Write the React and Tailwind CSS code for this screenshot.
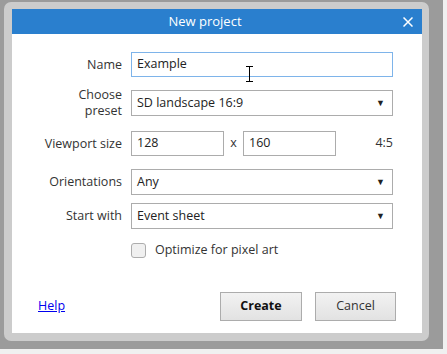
import React from 'react';

const font = { fontFamily: '"Open Sans", "Noto Sans", sans-serif' };

function Label({ children }) {
  return (
    <div className="w-[119px] shrink-0 pr-[9px] text-right text-[12.5px] leading-[16px] text-[#333]">{children}</div>
  );
}

function Select({ value }) {
  return (
    <div className="flex h-[26px] w-[262px] items-center justify-between border border-[#acacac] bg-white pl-[5px] pr-[7px] text-[12.5px] text-[#222]">
      <span>{value}</span>
      <span className="text-[9px] text-[#222]">▼</span>
    </div>
  );
}

export default function App() {
  return (
    <div className="h-[354px] w-[447px] bg-[#f0f0f0]" style={font}>
      <div className="h-[349px] w-[443px] bg-[#9b9b9b] pl-[4px] pt-[2px]">
        <div className="h-[339px] w-[425px] rounded-[7px] bg-[#cccccc] px-[8px] pt-[7px]">
          <div className="flex h-[324px] w-[410px] flex-col bg-white">
            {/* Title bar */}
            <div className="relative flex h-[25px] shrink-0 items-center justify-center bg-[#2a7fce] pr-[24px] text-[13px] text-white">
              New project
              <svg className="absolute right-[9px] top-[8px]" width="10" height="10" viewBox="0 0 10 10">
                <path d="M0.5 0.5 L9.5 9.5 M9.5 0.5 L0.5 9.5" stroke="white" strokeWidth="1.5" />
              </svg>
            </div>

            <div className="flex flex-col pt-[18px]">
              <div className="flex h-[25px] items-center">
                <Label>Name</Label>
                <div className="relative flex h-[25px] w-[262px] items-center border border-[#7eb4ea] bg-white pl-[5px] text-[12.5px] text-[#222]">
                  Example
                  <svg className="absolute left-[114px] top-[13px]" width="7" height="16" viewBox="0 0 7 16">
                    <path d="M0 0.5 H7 M3.5 0.5 V15.5 M0 15.5 H7" stroke="black" strokeWidth="1" />
                  </svg>
                </div>
              </div>

              <div className="mt-[13px] flex h-[26px] items-center">
                <Label>Choose<br />preset</Label>
                <Select value="SD landscape 16:9" />
              </div>

              <div className="mt-[15px] flex h-[25px] items-center">
                <Label>Viewport size</Label>
                <div className="flex h-[25px] w-[93px] items-center border border-[#acacac] pl-[5px] text-[12.5px] text-[#222]">128</div>
                <div className="w-[19px] text-center text-[12.5px] text-[#333]">x</div>
                <div className="flex h-[25px] w-[93px] items-center border border-[#acacac] pl-[5px] text-[12.5px] text-[#222]">160</div>
                <div className="w-[57px] text-right text-[12.5px] text-[#333]">4:5</div>
              </div>

              <div className="mt-[13px] flex h-[26px] items-center">
                <Label>Orientations</Label>
                <Select value="Any" />
              </div>

              <div className="mt-[8px] flex h-[26px] items-center">
                <Label>Start with</Label>
                <Select value="Event sheet" />
              </div>

              <div className="ml-[119px] mt-[14px] flex h-[15px] items-center">
                <div className="h-[15px] w-[15px] rounded-[3px] border border-[#adadad] bg-[#f0f0f0]" />
                <span className="ml-[9px] text-[12.5px] text-[#333]">Optimize for pixel art</span>
              </div>
            </div>

            <div className="mt-auto flex items-center pb-[12px]">
              <a className="ml-[26px] text-[12.5px] text-[#0000ee] underline">Help</a>
              <button className="ml-auto h-[29px] w-[82px] border border-[#acacac] bg-gradient-to-b from-[#f2f2f2] to-[#e2e2e2] text-[12.5px] font-bold text-[#111]">Create</button>
              <button className="ml-[13px] mr-[26px] h-[29px] w-[81px] border border-[#acacac] bg-gradient-to-b from-[#f2f2f2] to-[#e2e2e2] text-[12.5px] text-[#333]">Cancel</button>
            </div>
          </div>
        </div>
      </div>
    </div>
  );
}
